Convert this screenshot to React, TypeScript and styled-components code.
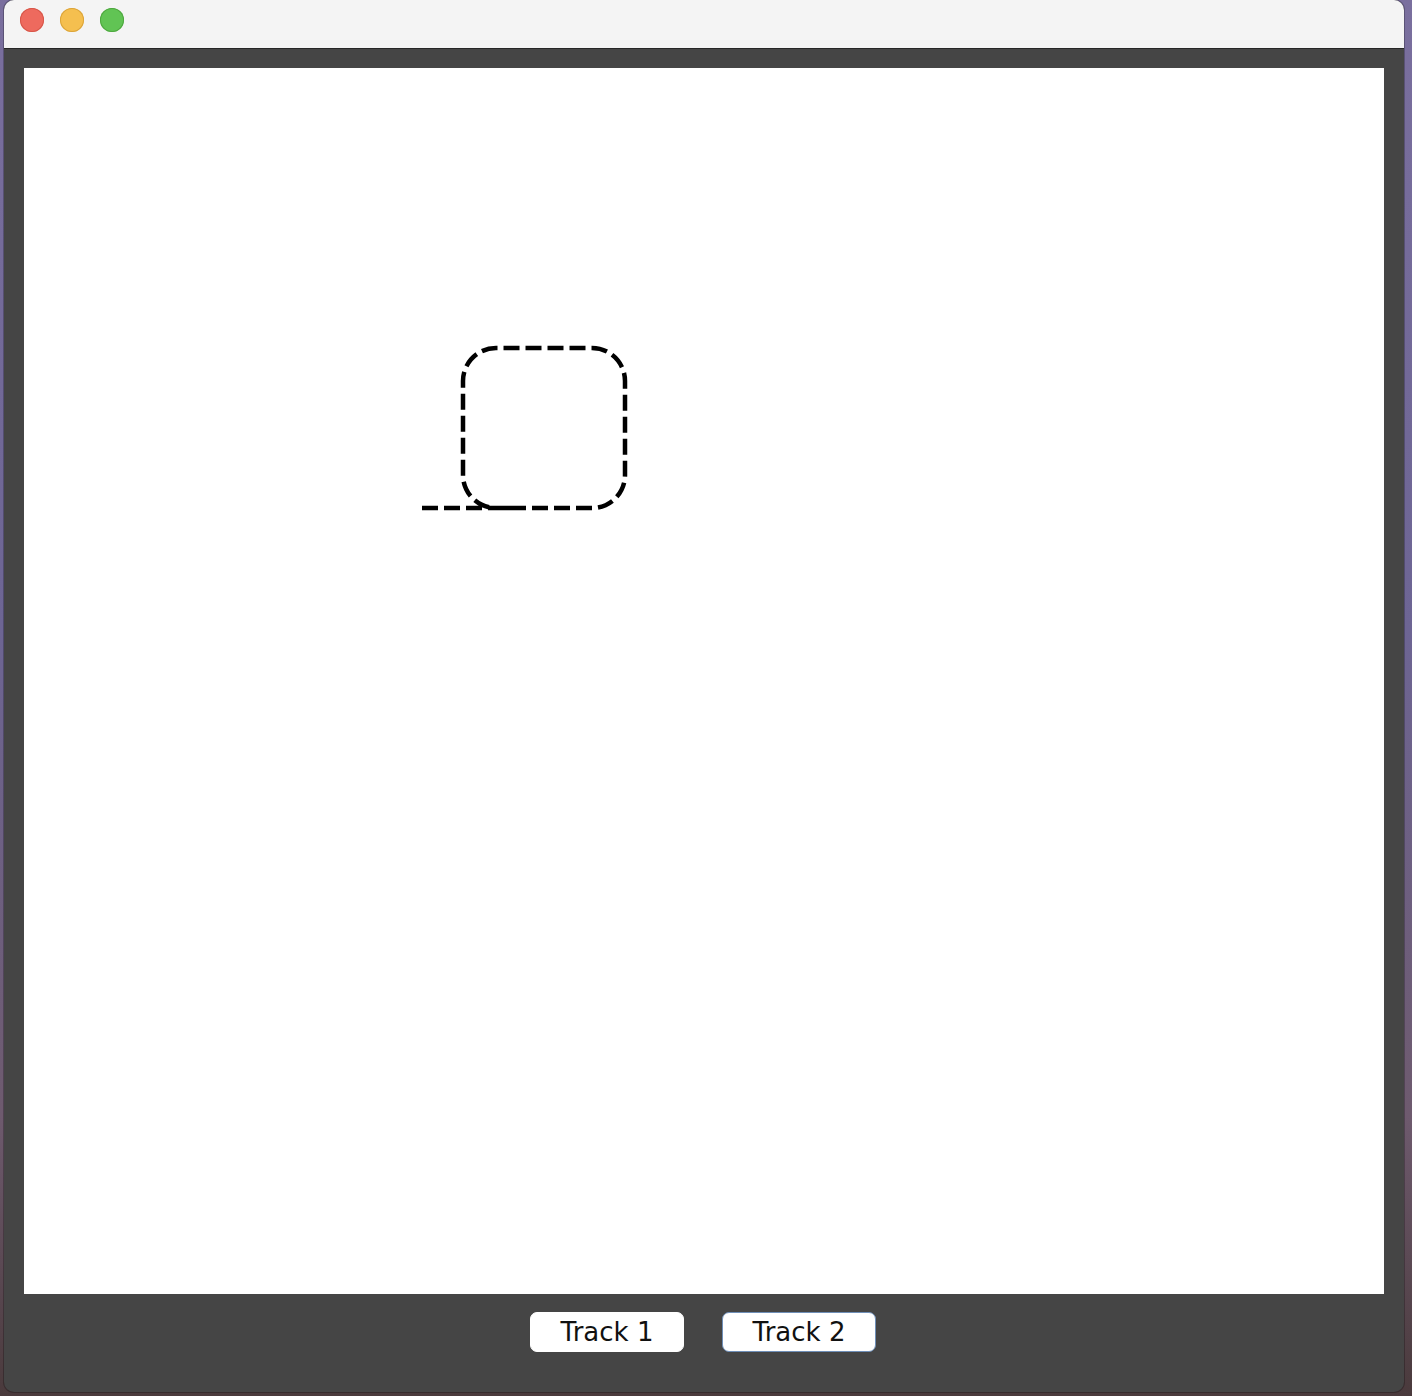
import React from "react";
import styled, { createGlobalStyle } from "styled-components";

const Global = createGlobalStyle`
  html, body { margin: 0; padding: 0; }
  body {
    width: 1412px;
    height: 1396px;
    overflow: hidden;
    background: linear-gradient(180deg, #7a6f9e 0%, #6d6594 45%, #6e5a6e 80%, #4a3a3c 100%);
    font-family: "DejaVu Sans", "Liberation Sans", sans-serif;
  }
`;

const Desktop = styled.div`
  width: 1412px;
  height: 1396px;
  padding-left: 4px;
  box-sizing: border-box;
`;

const Window = styled.div`
  width: 1400px;
  height: 1392px;
  border-radius: 10px;
  overflow: hidden;
  display: flex;
  flex-direction: column;
  background: #454545;
  box-shadow: 0 0 0 1px rgba(0, 0, 0, 0.25);
`;

const TitleBar = styled.div`
  height: 48px;
  flex: none;
  background: #f4f4f4;
  border-bottom: 1px solid #262626;
  display: flex;
  align-items: center;
  gap: 16px;
  padding-left: 16px;
  box-sizing: content-box;
`;

const Light = styled.span<{ $c: string; $b: string }>`
  width: 24px;
  height: 24px;
  border-radius: 50%;
  background: ${(p) => p.$c};
  box-shadow: inset 0 0 0 1px ${(p) => p.$b};
  margin-top: -8px;
`;

const Content = styled.div`
  flex: 1;
  display: flex;
  flex-direction: column;
  padding: 19px 20px 0 20px;
`;

const Canvas = styled.div`
  height: 1226px;
  background: #ffffff;
  flex: none;
`;

const ButtonBar = styled.div`
  display: flex;
  justify-content: center;
  gap: 38px;
  padding-top: 18px;
  padding-right: 2px;
`;

const Button = styled.button<{ $focus?: boolean }>`
  width: 154px;
  height: 40px;
  border-radius: 7px;
  background: #ffffff;
  border: 1px solid ${(p) => (p.$focus ? "#6f8fb8" : "#ffffff")};
  font-family: "DejaVu Sans", "Liberation Sans", sans-serif;
  font-size: 26px;
  color: #111;
  padding: 0;
  display: flex;
  align-items: center;
  justify-content: center;
`;

export default function App() {
  const path =
    "M 398 440 H 568 A 33 33 0 0 0 601 407 V 313 A 33 33 0 0 0 568 280 H 472 A 33 33 0 0 0 439 313 V 407 A 33 33 0 0 0 472 440 H 488";
  return (
    <Desktop>
      <Global />
      <Window>
        <TitleBar>
          <Light $c="#ee6a5e" $b="#d65649" />
          <Light $c="#f5bf4f" $b="#dba43a" />
          <Light $c="#61c454" $b="#4ea73f" />
        </TitleBar>
        <Content>
          <Canvas>
            <svg width="1360" height="1226">
              <path
                d={path}
                fill="none"
                stroke="#000"
                strokeWidth={4.5}
                strokeDasharray="16 6"
              />
            </svg>
          </Canvas>
          <ButtonBar>
            <Button>Track 1</Button>
            <Button $focus>Track 2</Button>
          </ButtonBar>
        </Content>
      </Window>
    </Desktop>
  );
}
